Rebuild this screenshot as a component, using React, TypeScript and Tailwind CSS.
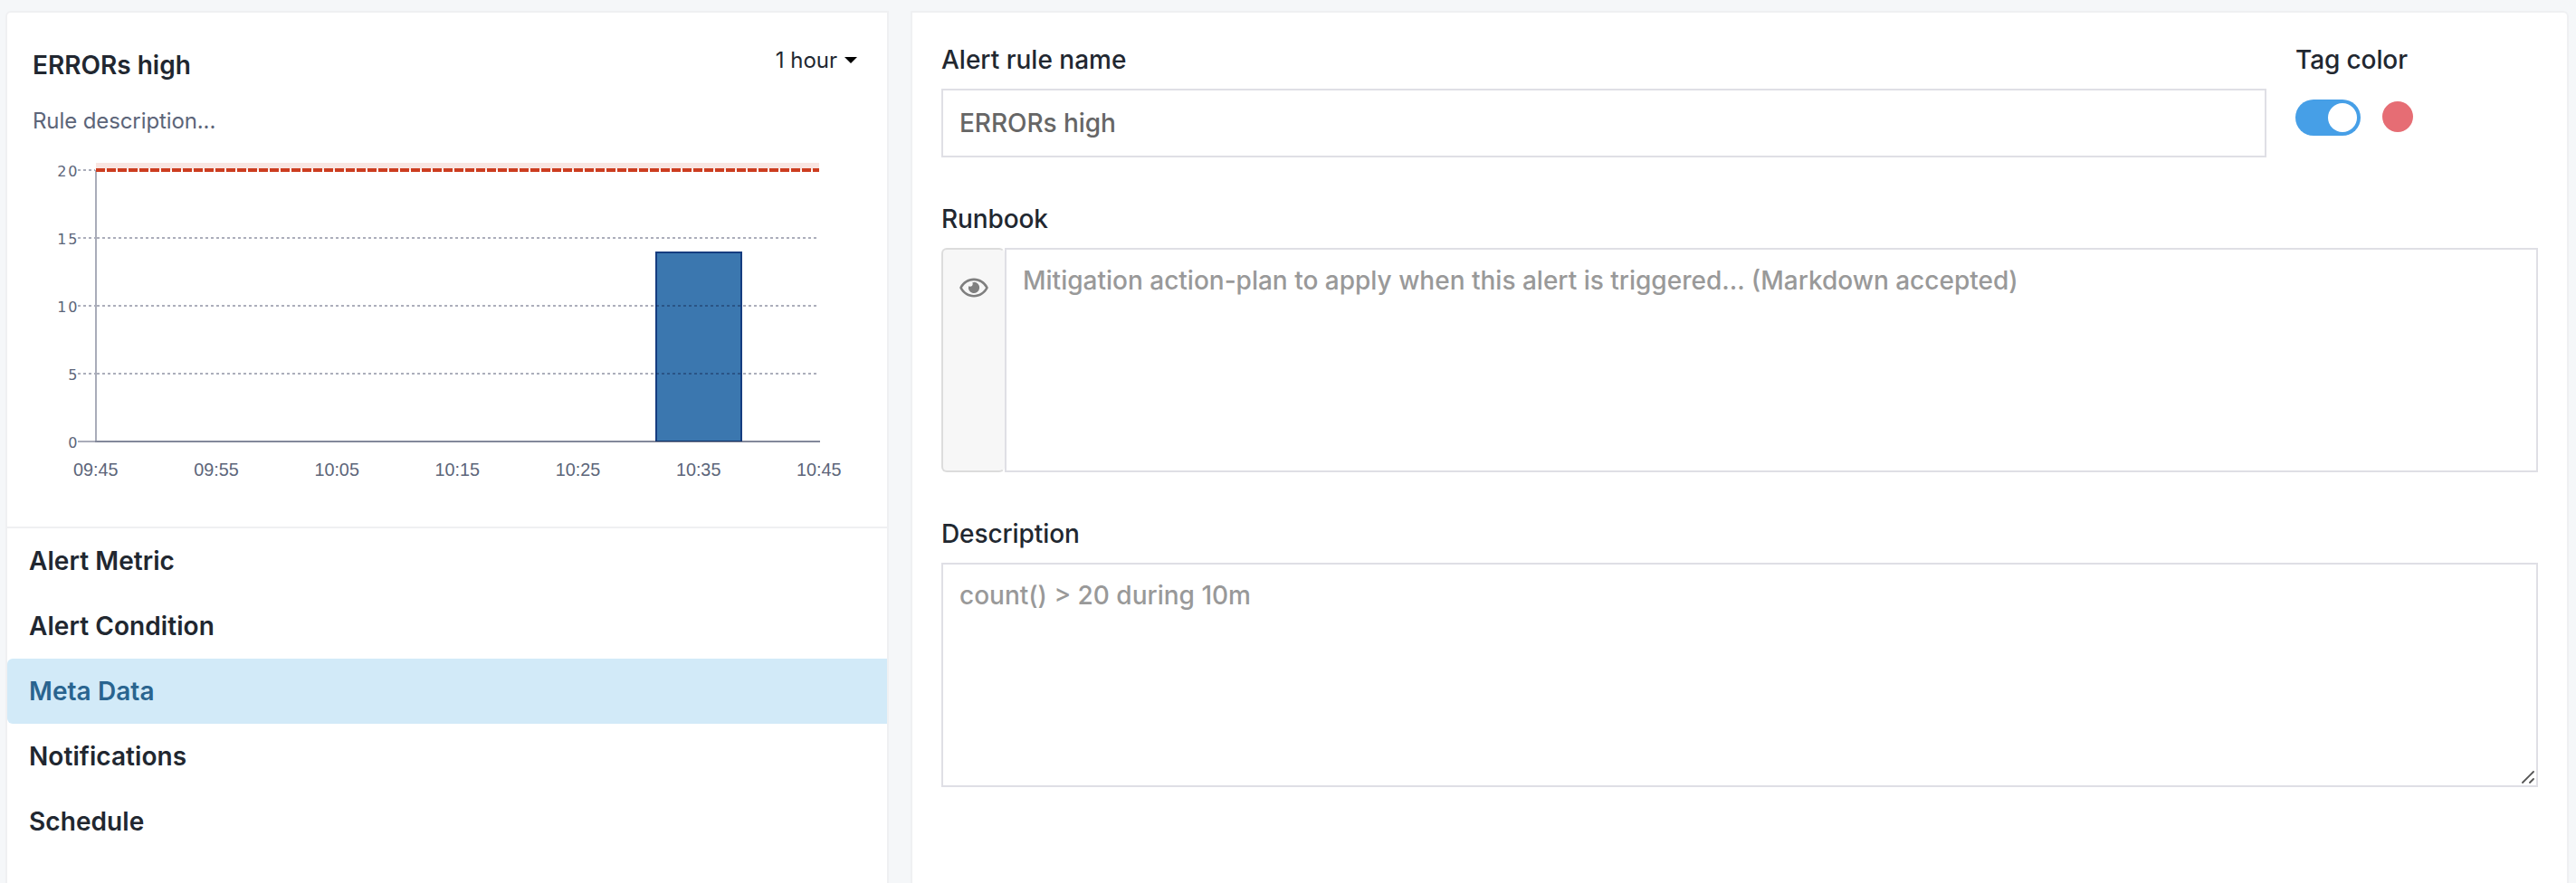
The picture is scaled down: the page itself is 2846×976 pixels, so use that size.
import { FaRegEye } from "react-icons/fa";

const NAV_ITEMS = ["Alert Metric", "Alert Condition", "Meta Data", "Notifications", "Schedule"];
const TIMES = ["09:45", "09:55", "10:05", "10:15", "10:25", "10:35", "10:45"];
const LEVELS = [
  { value: 15, y: 263 },
  { value: 10, y: 338 },
  { value: 5, y: 413 },
];

function Chart() {
  return (
    <svg className="block h-[412px] w-[972px]" viewBox="8 170 972 412" aria-label="Alert metric chart">
      {[{ value: 20, y: 188 }, ...LEVELS, { value: 0, y: 488 }].map(({ value, y }) => (
        <text
          key={value}
          x={87.2}
          y={y + 7}
          textAnchor="end"
          className="fill-[#5c6579] font-['DejaVu_Sans',sans-serif] text-[16px] tracking-[1.8px]"
        >
          {value}
        </text>
      ))}
      <rect x="724" y="278" width="96" height="210" fill="#3b77af" />
      <path d="M725 488V279H819V488" fill="none" stroke="#153d80" strokeWidth="2" />
      <path d="M86 188H105" stroke="#a9acb9" strokeWidth="2" strokeDasharray="3 3" />
      {LEVELS.map(({ value, y }) => (
        <g key={value} stroke="#0c1238" strokeOpacity="0.34" strokeWidth="2" strokeDasharray="3 3">
          <path d={`M86 ${y}H105`} />
          <path d={`M107 ${y}H904`} />
        </g>
      ))}
      <path d="M106 188V488" stroke="#a9acb9" strokeWidth="2" />
      <path d="M86 488H106" stroke="#a9acb9" strokeWidth="2" />
      <path d="M105 488H906" stroke="#83889a" strokeWidth="2" />
      <path d="M724 487.5H820" stroke="#153468" strokeWidth="1" />
      <rect x="106" y="180" width="799" height="8" fill="#f9e5e1" />
      <path d="M106 188H905" stroke="#cc3d20" strokeWidth="4" strokeDasharray="10 2" />
      {TIMES.map((time, i) => (
        <text
          key={time}
          x={105.8 + (i * 799) / 6}
          y={526}
          textAnchor="middle"
          className="fill-[#5c6579] font-['Liberation_Sans',sans-serif] text-[19.8px]"
        >
          {time}
        </text>
      ))}
    </svg>
  );
}

export default function App() {
  return (
    <div className="flex h-[976px] w-[2846px] gap-6 overflow-hidden bg-[#f5f7f9] pt-3 pr-2 pl-1.5 font-['Inter',sans-serif] text-[28px] leading-9 text-[#212730]">
      <aside className="h-[1000px] w-[976px] shrink-0 rounded-tl-md border-2 border-[#eff0f2] bg-white">
        <div className="flex h-[156px] flex-col pt-10 pr-[33px] pl-7">
          <div className="flex h-9 items-start justify-between">
            <h1 className="font-semibold">ERRORs high</h1>
            <button className="-mt-[3px] flex items-center text-[24px] leading-8">
              1 hour
              <svg className="mb-0.5 ml-2 h-[7px] w-3.5" viewBox="0 0 14 7">
                <path d="M0 0H14L7 7Z" fill="#000" />
              </svg>
            </button>
          </div>
          <p className="mt-7 text-[24px] leading-8 tracking-[-0.1px] text-[#5c6579]">Rule description...</p>
        </div>
        <Chart />
        <nav className="border-t-2 border-[#eff0f2] tracking-[0.07px]">
          {NAV_ITEMS.map((item) => (
            <a
              key={item}
              className={
                item === "Meta Data"
                  ? "flex h-[72px] items-center rounded-l-md bg-[#d2eaf8] pl-6 font-semibold text-[#29648f]"
                  : "flex h-[72px] items-center pl-6 font-semibold"
              }
            >
              {item}
            </a>
          ))}
        </nav>
      </aside>

      <main className="flex h-[1000px] w-[1832px] shrink-0 flex-col rounded-tr-md border-2 border-[#eff0f2] bg-white pt-[34px] pr-8 pl-8 font-medium">
        <div className="flex gap-8">
          <div className="w-[1464px]">
            <label className="block">Alert rule name</label>
            <input
              className="mt-3.5 block h-[76px] w-full border-2 border-[#dfdfe5] px-[18px] tracking-[-0.05px] text-[#666]"
              defaultValue="ERRORs high"
            />
          </div>
          <div>
            <label className="block tracking-[-0.1px]">Tag color</label>
            <div className="mt-[26px] flex items-start gap-6">
              <span className="flex h-10 w-[72px] items-center justify-end rounded-full bg-[#469fe7] pr-1">
                <span className="size-8 rounded-full bg-white" />
              </span>
              <span className="mt-0.5 size-[34px] rounded-full bg-[#e66d74]" />
            </div>
          </div>
        </div>

        <label className="mt-[50px] block tracking-[-0.1px]">Runbook</label>
        <div className="mt-3.5 flex h-[248px]">
          <div className="flex w-[70px] justify-center rounded-md border-2 border-[#dcdcdc] border-r-transparent bg-[#f7f7f7] pt-7 pl-0.5">
            <FaRegEye className="h-7 w-8 text-[#7f7f7f]" />
          </div>
          <textarea
            className="block h-full flex-1 resize-none border-2 border-[#dfdfe5] px-[18px] py-4 placeholder:text-[#999]"
            placeholder="Mitigation action-plan to apply when this alert is triggered... (Markdown accepted)"
          />
        </div>

        <label className="mt-[50px] block tracking-[-0.1px]">Description</label>
        <div className="relative mt-3.5 h-[248px]">
          <textarea
            className="block h-full w-full resize-none border-2 border-[#dfdfe5] px-[18px] py-4 placeholder:text-[#999]"
            placeholder="count() > 20 during 10m"
          />
          <svg className="absolute right-1 bottom-1 size-3.5" viewBox="0 0 14 14">
            <path d="M1 13L13 1M9 13L13 9" stroke="#555" strokeWidth="1.8" strokeLinecap="round" />
          </svg>
        </div>
      </main>
    </div>
  );
}
